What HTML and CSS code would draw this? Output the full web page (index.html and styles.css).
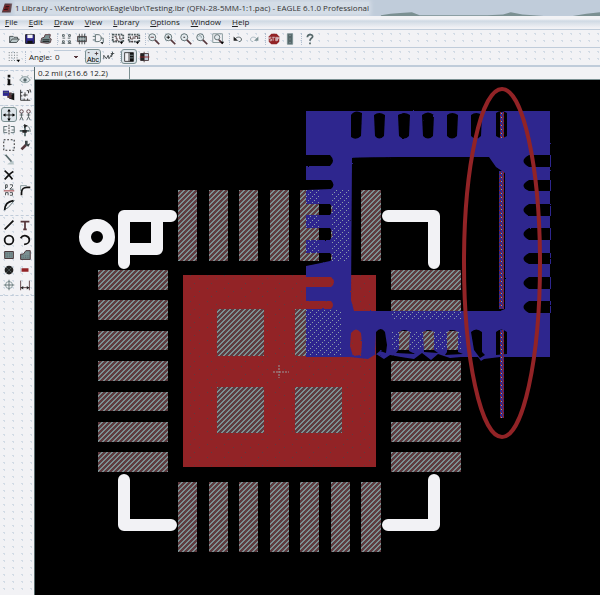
FILE: index.html
```html
<!DOCTYPE html>
<html lang="en">
<head>
<meta charset="utf-8">
<title>1 Library - EAGLE 6.1.0 Professional</title>
<link rel="stylesheet" href="styles.css">
</head>
<body>
<div class="app">
<header class="title">
  <svg class="ic" viewBox="0 0 16 16"><path d="M5 2h10l-2 12H1z" fill="#56373c"/><path d="M5 5l7-1-2 7-7 1z" fill="#922326"/><path d="M6 6h5M5 8h5M4 10h5" stroke="#111"/></svg>
  <h1>1 Library - \\Kentro\work\Eagle\lbr\Testing.lbr (QFN-28-5MM-1:1.pac) - EAGLE 6.1.0 Professional</h1>
  <svg class="ridge" viewBox="0 0 230 8" preserveAspectRatio="none"><path d="M4 7L14 5l10-1 12-1 8 4h70l16-1 8-3 12 3 22 2h30l14-3 20-3v8H4z" fill="#7b9092"/></svg>
</header>
<nav class="menu">
  <a href="#"><u>F</u>ile</a><a href="#"><u>E</u>dit</a><a href="#"><u>D</u>raw</a><a href="#"><u>V</u>iew</a><a href="#"><u>L</u>ibrary</a><a href="#"><u>O</u>ptions</a><a href="#"><u>W</u>indow</a><a href="#"><u>H</u>elp</a>
</nav>
<div class="bar">
  <button aria-label="Open"><svg viewBox="0 0 16 16"><path d="M3 12V5h4l1 1h4v2M3 12l3-4h8l-3 4z" fill="#b9c6c8" stroke="#3e4648"/></svg></button>
  <button aria-label="Save"><svg viewBox="0 0 16 16"><path d="M3 3h10v10H3z" fill="#2e278e" stroke="#111"/><path d="M5 3h6v4H5z" fill="#f2f2f5"/><path d="M5 10h6v3H5z" fill="#111"/></svg></button>
  <button aria-label="Print"><svg viewBox="0 0 16 16"><path d="M3 7l3-1 1-3h6l-1 4 2 1-1 4-3 1-8-1z" fill="#7b9092" stroke="#56373c"/><path d="M4 9h8M4 11h8" stroke="#111"/></svg></button>
  <i></i>
  <button aria-label="Device"><svg viewBox="0 0 16 16"><path d="M4 3h2v2H4zM11 3h2v2h-2zM4 10h2v2H4zM11 10h2v2h-2zM4 7h3M10 7h3M3 13h4M10 13h4" fill="none" stroke="#4c595b"/></svg></button>
  <button aria-label="Package"><svg viewBox="0 0 16 16"><path d="M3 5h10v6H3z" fill="#7b9092" stroke="#4c3a3d"/><path d="M5 2v12M8 2v12M11 2v12" stroke="#3e4648"/><path d="M4 8h8" stroke="#f2f2f5"/></svg></button>
  <button aria-label="Symbol"><svg viewBox="0 0 16 16"><path d="M5 3h3c5 0 5 8 0 8H5zM2 5h3M2 9h3M11 7h3v5h-3" fill="none" stroke="#56686a"/><path d="M11 12h3l-1 2z"/></svg></button>
  <i></i>
  <button aria-label="Script"><svg viewBox="0 0 16 16"><path d="M2 3h12v8H2z" fill="none" stroke="#4c595b" stroke-width="2" stroke-dasharray="2 1"/><path d="M4 5h2v3h2M10 4v4h3M4 11l3-2 2 2" fill="none" stroke="#4c3a3d"/><path d="M10 11h4l-2 3z"/></svg></button>
  <button aria-label="Run"><svg viewBox="0 0 16 16"><path d="M2 3h12v8H2z" fill="none" stroke="#4c595b" stroke-width="2" stroke-dasharray="2 1"/><path d="M4 5v3h3V5M9 8V5h3v3M4 11h3" fill="none" stroke="#4c3a3d"/><path d="M10 11h4l-2 3z"/></svg></button>
  <i></i>
  <button aria-label="Fit"><svg viewBox="0 0 16 16"><circle cx="6" cy="6" r="4" class="lens"/><path d="M9 9l5 5" class="handle"/><path d="M4 6h4" stroke="#56373c"/></svg></button>
  <button aria-label="Zoom in"><svg viewBox="0 0 16 16"><circle cx="6" cy="6" r="4" class="lens"/><path d="M9 9l5 5" class="handle"/><path d="M4 6h4M6 4v4" stroke="#111"/></svg></button>
  <button aria-label="Zoom out"><svg viewBox="0 0 16 16"><circle cx="6" cy="6" r="4" class="lens"/><path d="M9 9l5 5" class="handle"/><path d="M5 6h2" stroke="#111"/></svg></button>
  <button aria-label="Redraw"><svg viewBox="0 0 16 16"><circle cx="6" cy="6" r="4" class="lens"/><path d="M9 9l5 5" class="handle"/><path d="M4 5c2-2 4 0 3 2" fill="none" stroke="#7b9092"/></svg></button>
  <button aria-label="Zoom select"><svg viewBox="0 0 16 16"><path d="M2 2h11v10H2z" fill="none" stroke="#7b9092"/><circle cx="7" cy="6" r="3" class="lens"/><path d="M9 9l4 4" class="handle"/><path d="M11 11h4l-2 3z"/></svg></button>
  <i></i>
  <button aria-label="Undo"><svg viewBox="0 0 16 16"><path d="M4 9c2-4 7-4 8-1 0 2-1 3-3 3" fill="none" stroke="#4c595b"/><path d="M3 5v5h5z" fill="#222"/></svg></button>
  <button aria-label="Redo"><svg viewBox="0 0 16 16"><path d="M12 9c-2-4-7-4-8-1 0 2 1 3 3 3" fill="none" stroke="#a4b4bc"/><path d="M13 5v5H8z" fill="#7b9092"/></svg></button>
  <i></i>
  <button aria-label="Stop"><svg viewBox="0 0 16 16"><path d="M5 2h6l3 3v6l-3 3H5l-3-3V5z" fill="#922326"/><path d="M5 6H3v2h2v2H3M6 6h3M7 6v4M10 6h1v4h-1zM12 10V6h1v2h-1" fill="none" stroke="#d9c5c9"/></svg></button>
  <button aria-label="Go"><svg viewBox="0 0 16 16"><path d="M5 2h6v12H5z" fill="#56686a" stroke="#7b9092"/><path d="M7 4h2M7 8h2M7 12h2" stroke="#7b9092"/></svg></button>
  <i></i>
  <button aria-label="Help"><svg viewBox="0 0 16 16"><path d="M5 6c0-4 6-4 6-1 0 2-3 2-3 5M8 12v2" fill="none" stroke="#56686a" stroke-width="2"/></svg></button>
</div>
<div class="bar options">
  <button aria-label="Grid"><svg viewBox="0 0 16 16"><path d="M2 3h12M2 6h12M2 9h12M2 12h12" stroke="#4c595b" stroke-dasharray="1 2"/><path d="M11 11h4l-2 3z"/></svg></button>
  <i></i>
  <label for="angle">Angle:</label>
  <select id="angle"><option>0</option><option>90</option></select>
  <button class="on" aria-label="Text normal"><svg viewBox="0 0 16 16"><text x="1" y="14" font-size="8">Abc</text><path d="M12 2v4M10 4h4M2 3h2" stroke="#4c3a3d"/></svg></button>
  <button aria-label="Spin"><svg viewBox="0 0 16 16"><path d="M2 10V6l3 4 2-4 1 4 3-5v3M12 2v4M10 4h4" fill="none" stroke="#3e4648"/></svg></button>
  <i></i>
  <button class="on" aria-label="Left layout"><svg viewBox="0 0 16 16"><path d="M3 3h10v10H3zM8 3v10" fill="#f2f2f5" stroke="#333"/><path d="M9 3h4v10H9z" fill="#111"/><path d="M9 6h4M9 9h4" stroke="#7b9092"/></svg></button>
  <button aria-label="Right layout"><svg viewBox="0 0 16 16"><path d="M3 4h9v8H3zM7 2v12" fill="#c0ccda" stroke="#4c3a3d"/><path d="M3 4h4v8H3z" fill="#222"/><path d="M2 8h11" stroke="#922326"/></svg></button>
</div>
<div class="work">
<aside class="tools">
  <div class="group">
    <button aria-label="Info"><svg viewBox="0 0 16 16"><path d="M8 2v3M8 7v7" stroke="#111" stroke-width="3"/><path d="M6 7h2M6 13h5" stroke="#111"/></svg></button>
    <button aria-label="Show"><svg viewBox="0 0 16 16"><path d="M2 8c3-5 9-5 12 0-3 4-9 4-12 0z" fill="#dbe3e7" stroke="#7b9092"/><circle cx="8" cy="8" r="2" fill="#56686a"/><path d="M4 3l2 1M10 4l2-1" stroke="#7b9092"/></svg></button>
    <button aria-label="Layers"><svg viewBox="0 0 16 16"><path d="M8 6h6v8L8 12z" fill="#111"/><path d="M6 5h5v7l-5-1z" fill="#56373c"/><path d="M1 3h7v6H1z" fill="#2e278e"/><path d="M2 5h5M10 7h2" stroke="#56686a"/></svg></button>
    <button aria-label="Mark"><svg viewBox="0 0 16 16"><path d="M3 2v12h11M3 5h2M3 9h2M7 14v-2M11 14v-2M8 5v5M6 8h5M10 3h2v3M13 2h1v3" fill="none" stroke="#222"/></svg></button>
  </div>
  <div class="group">
    <button class="on" aria-label="Move"><svg viewBox="0 0 16 16"><path d="M8 2v12M2 8h12" stroke="#111"/><path d="M6 4l2-3 2 3zM6 12l2 3 2-3zM4 6L1 8l3 2zM12 6l3 2-3 2z"/></svg></button>
    <button aria-label="Copy"><svg viewBox="0 0 16 16"><circle cx="4" cy="4" r="2" fill="none" stroke="#56373c"/><circle cx="12" cy="4" r="2" fill="none" stroke="#56373c"/><path d="M4 6v4l-2 4M4 10l2 4M2 8h4M12 6v4l-2 4M12 10l2 4M10 8h4" fill="none" stroke="#4c595b"/></svg></button>
    <button aria-label="Mirror"><svg viewBox="0 0 16 16"><path d="M8 2v12" stroke="#222" stroke-dasharray="2 1"/><path d="M6 4H2v7h4M10 4h4v7h-4M2 8h3M11 8h3" fill="none" stroke="#56686a"/></svg></button>
    <button aria-label="Rotate"><svg viewBox="0 0 16 16"><path d="M8 3v12M2 9h11" stroke="#56686a" stroke-width="2"/><path d="M6 3c5-1 8 2 8 7" fill="none" stroke="#56686a"/><path d="M7 1l4 2-4 3zM5 8h5v3H5z" fill="#222"/></svg></button>
    <button aria-label="Group"><svg viewBox="0 0 16 16"><path d="M2 2h12v12H2z" fill="none" stroke="#111" stroke-dasharray="2 2"/></svg></button>
    <button aria-label="Change"><svg viewBox="0 0 16 16"><path d="M4 13l5-5" stroke="#56373c" stroke-width="3"/><path d="M8 3v5l4 2 2-4-3 1V3z" fill="#3e4648"/></svg></button>
    <button aria-label="Paste"><svg viewBox="0 0 16 16"><path d="M4 2l7 8" stroke="#56686a" stroke-width="2"/><path d="M7 12l5-3 2 4H6z" fill="#b9c6c8"/></svg></button><span></span>
    <button aria-label="Delete"><svg viewBox="0 0 16 16"><path d="M3 3c4 3 6 6 9 10M13 4c-4 2-7 6-10 9" fill="none" stroke="#111" stroke-width="2"/></svg></button><span></span>
    <button aria-label="Name"><svg viewBox="0 0 16 16"><path d="M4 7V2h2v3H4M9 2h3v2L9 7h4M4 14v-3h3v3M9 11h3v3H9" fill="none" stroke="#3e4648"/><path d="M2 9h12" stroke="#922326"/></svg></button>
    <button aria-label="Miter"><svg viewBox="0 0 16 16"><path d="M4 14v-3c0-4 3-6 6-6h4" fill="none" stroke="#111" stroke-width="2"/><path d="M3 9V3h7" fill="none" stroke="#7b9092"/></svg></button>
    <button aria-label="Split"><svg viewBox="0 0 16 16"><path d="M3 13L5 6l9-3-7 8z" fill="none" stroke="#56686a"/><path d="M3 14c0-6 4-10 10-11" fill="none" stroke="#111" stroke-width="2"/></svg></button><span></span>
  </div>
  <div class="group">
    <button aria-label="Wire"><svg viewBox="0 0 16 16"><path d="M3 13L13 3" stroke="#111" stroke-width="2"/></svg></button>
    <button aria-label="Text"><svg viewBox="0 0 16 16"><path d="M4 5V4h8v1M8 4v9M6 13h4" fill="none" stroke="#56373c" stroke-width="2"/></svg></button>
    <button aria-label="Circle"><svg viewBox="0 0 16 16"><circle cx="8" cy="8" r="5" fill="none" stroke="#111" stroke-width="2"/></svg></button>
    <button aria-label="Arc"><svg viewBox="0 0 16 16"><path d="M3 6c3-5 10-3 10 2 0 3-3 5-6 5" fill="none" stroke="#111" stroke-width="2"/></svg></button>
    <button aria-label="Rectangle"><svg viewBox="0 0 16 16"><path d="M3 4h10v8H3z" fill="#7b9092" stroke="#3b2629"/><path d="M4 6h8M4 8h8M4 10h8" stroke="#56686a" stroke-dasharray="1 1"/></svg></button>
    <button aria-label="Polygon"><svg viewBox="0 0 16 16"><path d="M3 13V7h3l3-4h5v10z" fill="#7b9092" stroke="#3b2629"/><path d="M4 9h9M4 11h9" stroke="#56686a" stroke-dasharray="1 1"/></svg></button>
    <button aria-label="Pad"><svg viewBox="0 0 16 16"><circle cx="8" cy="8" r="5" fill="#222"/><path d="M5 5l6 6M5 11l6-6" stroke="#7b9092" stroke-dasharray="1 1"/></svg></button>
    <button aria-label="Smd"><svg viewBox="0 0 16 16"><path d="M4 6h8v4H4z" fill="#922326"/><path d="M3 5v6" stroke="#c0ccda"/></svg></button>
    <button aria-label="Hole"><svg viewBox="0 0 16 16"><circle cx="8" cy="8" r="4" fill="none" stroke="#7b9092"/><path d="M8 2v12M2 8h12" stroke="#56686a"/></svg></button>
    <button aria-label="Dimension"><svg viewBox="0 0 16 16"><path d="M3 3v11M13 3v11M3 11h10" stroke="#56373c"/><path d="M6 9v4l-3-2zM10 9v4l3-2z" fill="#222"/></svg></button>
  </div>
  <div class="group"></div>
</aside>
<main class="editor">
  <output class="coords">0.2 mil (216.6 12.2)</output>
  <svg class="board" viewBox="35 80 565 515" preserveAspectRatio="xMinYMin meet" role="img" aria-label="QFN-28 package footprint">
    <defs>
      <pattern id="hatch" width="5" height="5" patternUnits="userSpaceOnUse"><path d="M0 0h5v5H0z" fill="#5e3b40"/><path d="M3 0h2v1H3zM2 1h2v1H2zM1 2h2v1H1zM0 3h2v1H0zM0 4h1v1H0zM4 4h1v1H4z" fill="#7b9092" shape-rendering="crispEdges"/></pattern>
      <pattern id="speck" width="6" height="6" patternUnits="userSpaceOnUse"><path d="M0 4h1v1H0zM2 2h1v1H2zM4 0h1v1H4z" fill="#8b9cab" shape-rendering="crispEdges"/></pattern>
      <pattern id="grain" width="17" height="13" patternUnits="userSpaceOnUse"><path d="M0 0h17v13H0z" fill="#922326"/><path d="M3 2h1v1H3zM12 5h1v1h-1zM7 10h1v1H7z" fill="#5e3b40"/></pattern>
      <pattern id="mix" width="5" height="4" patternUnits="userSpaceOnUse"><path d="M0 0h5v4H0z" fill="#2e278e"/><path d="M0 0h1v2H0zM2 2h1v2H2zM3 0h1v2H3zM4 2h1v1H4z" fill="#922326"/><path d="M1 1h1v1H1z" fill="#8b9cab"/></pattern>
      <g id="pads">
        <path d="M178 190h19v71h-19zM209 190h19v71h-19zM239 190h19v71h-19zM270 190h19v71h-19zM300 190h19v71h-19zM331 190h19v71h-19zM361 190h20v71h-20z"/>
        <path d="M178 482h19v70h-19zM209 482h19v70h-19zM239 482h19v70h-19zM270 482h19v70h-19zM300 482h19v70h-19zM331 482h19v70h-19zM361 482h20v70h-20z"/>
        <path d="M98 270h70v20H98zM98 300h70v20H98zM98 331h70v19H98zM98 361h70v20H98zM98 392h70v19H98zM98 422h70v20H98zM98 452h70v20H98z"/>
        <path d="M391 270h70v20h-70zM391 300h70v20h-70zM391 331h70v19h-70zM391 361h70v20h-70zM391 392h70v19h-70zM391 422h70v20h-70zM391 452h70v20h-70z"/>
        <path d="M217 309h47v47h-47zM295 309h47v47h-47zM217 387h47v46h-47zM295 387h47v46h-47z"/>
      </g>
      <path id="copper" clip-rule="evenodd" fill-rule="evenodd" d="M306 111H550V357H500L484 359 481 361 478 357H461L450 358 438 354 431 360 422 353 414 359 401 357 390 355 384 359 376 354 368 359 350 357H306Z
        M352 158Q354 157 400 157T489 157L496 167 505 173V309L500 311H354L351 300Z
        M351 115Q355 109 362 113L361 136Q356 141 351 137ZM374 115Q379 111 385 115L384 136Q379 141 375 136ZM398 115Q404 111 410 115L409 136Q404 141 399 136ZM422 115Q428 110 434 115L433 136Q428 141 423 136ZM447 115Q452 111 458 115L457 136Q452 141 447 136ZM471 115Q476 111 482 115L481 136Q476 141 471 136ZM496 113Q501 109 507 113V136Q501 140 496 136Z
        M306 155h24q6 6 0 11h-24zM306 180h25q5 5 0 9l-25 1zM306 204h24q5 5 0 11h-24zM306 228h24q5 6 0 12h-24zM306 253h24q5 5 0 8l-9 2-15 3zM306 277h25q6 5 0 10h-25zM306 301h25q4 4 0 8h-25z
        M551 155h-22q-11 6 0 12h22zM551 180h-22q-11 6 0 11h22zM551 204h-22q-11 6 0 12h22zM551 228h-22q-11 6 0 12h22zM551 253h-22q-11 6 0 11h22zM551 277h-22q-11 6 0 12h22zM551 301h-22q-11 6 0 12h22z
        M351 333q5-7 10 0l1 10-1 12-8 1-3-10zM376 332q5-6 9 0l2 13-1 8-6-2-5 4zM399 332q5-4 11 0l-1 19 6 3-19-1 3-4zM423 332q5-4 11 0v18l4 3-14-1zM447 332q5-4 11 0v20l5 2-18 1 2-3zM471 332q5-5 11 0v20l3 3-5 3-6-8zM496 332q5-5 11 0v22l-11 1z"/>
      <clipPath id="in-copper"><use href="#copper"/></clipPath>
      <filter id="rough" x="-5%" y="-5%" width="110%" height="110%"><feTurbulence type="fractalNoise" baseFrequency="0.4" numOctaves="1" seed="4"/><feDisplacementMap in="SourceGraphic" scale="2" xChannelSelector="R" yChannelSelector="G"/></filter>
    </defs>
    <g shape-rendering="crispEdges"><path d="M183 275h193v192H183z" fill="url(#grain)"/><use href="#pads" fill="url(#hatch)"/></g>
    <g fill="none" stroke="#f2f2f5" stroke-width="12" stroke-linecap="round" stroke-linejoin="round">
      <circle cx="97" cy="237" r="12"/>
      <path d="M124 263V216H171M157 216V249H124M388 216H434V263M124 480V525H171M434 480V525H388"/>
    </g>
    <use href="#copper" fill="#2e278e" filter="url(#rough)"/>
    <g clip-path="url(#in-copper)"><use href="#pads" fill="url(#speck)"/></g>
    <path d="M500 112h4v26h-4zM499 171h5v138h-5zM500 330h4v88h-4z" fill="url(#mix)" shape-rendering="crispEdges"/>
    <path d="M279 365v13M273 372h16" stroke="#9a9a9a" stroke-dasharray="2 1"/>
    <ellipse cx="502" cy="263" rx="38" ry="174" fill="none" stroke="#922326" stroke-width="4"/>
  </svg>
</main>
</div>
</div>
</body>
</html>
```
FILE: styles.css
```css
* { box-sizing: border-box; }
body { margin: 0; background: #000; }
.app { min-height: 100vh; display: flex; flex-direction: column; font: 8px/12px "Open Sans", "Noto Sans", sans-serif; color: #222; }
svg { display: block; }
.title { display: flex; align-items: center; height: 16px; padding-left: 1px; background: #c0ccda; }
.ic { width: 12px; height: 12px; flex: none; }
h1 { margin: 0 0 0 2px; font: inherit; font-size: 8px; color: #333; white-space: nowrap; background: #d3dce6; box-shadow: 0 0 4px 2px #d3dce6; }
.ridge { flex: 1; min-width: 0; height: 6px; margin-left: 8px; align-self: flex-end; }
.menu { display: flex; gap: 11px; height: 14px; padding-left: 5px; border-bottom: 1px solid #c0ccda; background: linear-gradient(#f2f2f5 0 3px, #cfd9e4 5px, #f2f2f5 12px); }
.menu a { color: inherit; text-decoration: none; }
.bar { display: flex; align-items: center; height: 18px; padding-left: 6px; border-bottom: 1px solid #c0ccda; background: #f2f2f5 radial-gradient(circle, #d2dbe5 0 1px, transparent 1px) 0 0 / 9px 7px; }
.options { height: 19px; border-bottom-width: 2px; }
.bar i { width: 4px; height: 12px; border-right: 1px dotted #b4c0d0; flex: none; }
button { appearance: none; width: 16px; height: 15px; padding: 0; border: 0; background: transparent; border-radius: 3px; flex: none; display: grid; place-items: center; }
button svg { width: 14px; height: 14px; }
button.on { border: 1px solid #7b9092; background: #dde4ea; }
.lens { fill: #e4eaee; stroke: #56686a; }
.handle { stroke: #56373c; stroke-width: 2; }
.bar label { margin-left: 3px; width: 25px; }
select { width: 27px; height: 13px; margin-right: 4px; padding: 0 0 0 1px; border: 0; border-top: 1px solid #c0ccda; appearance: none; font: inherit; color: inherit; background: linear-gradient(135deg, #56373c 50%, transparent 50%) 22px 5px / 3px 3px no-repeat, linear-gradient(225deg, #56373c 50%, transparent 50%) 19px 5px / 3px 3px no-repeat, #f2f2f5; }
.work { flex: 1; display: flex; min-height: 0; }
.tools { width: 35px; flex: none; padding-top: 3px; border-right: 1px solid #56686a; background: #f2f2f5 radial-gradient(circle, #d2dbe5 0 1px, transparent 1px) 0 0 / 9px 7px; }
.group { display: grid; grid-template-columns: 16px 16px; grid-auto-rows: 15px; padding: 1px 0 2px 1px; margin-bottom: 1px; border-top: 1px dashed #c0ccda; }
.editor { flex: 1; min-width: 0; display: flex; flex-direction: column; background: #000; }
.coords { display: block; height: 13px; padding-left: 3px; background: linear-gradient(#7b9092, #7b9092) 94px 0 / 1px 12px no-repeat, #f2f2f5; border-bottom: 1px solid #7b9092; }
.board { width: 100%; flex: 1; min-height: 0; }
```
